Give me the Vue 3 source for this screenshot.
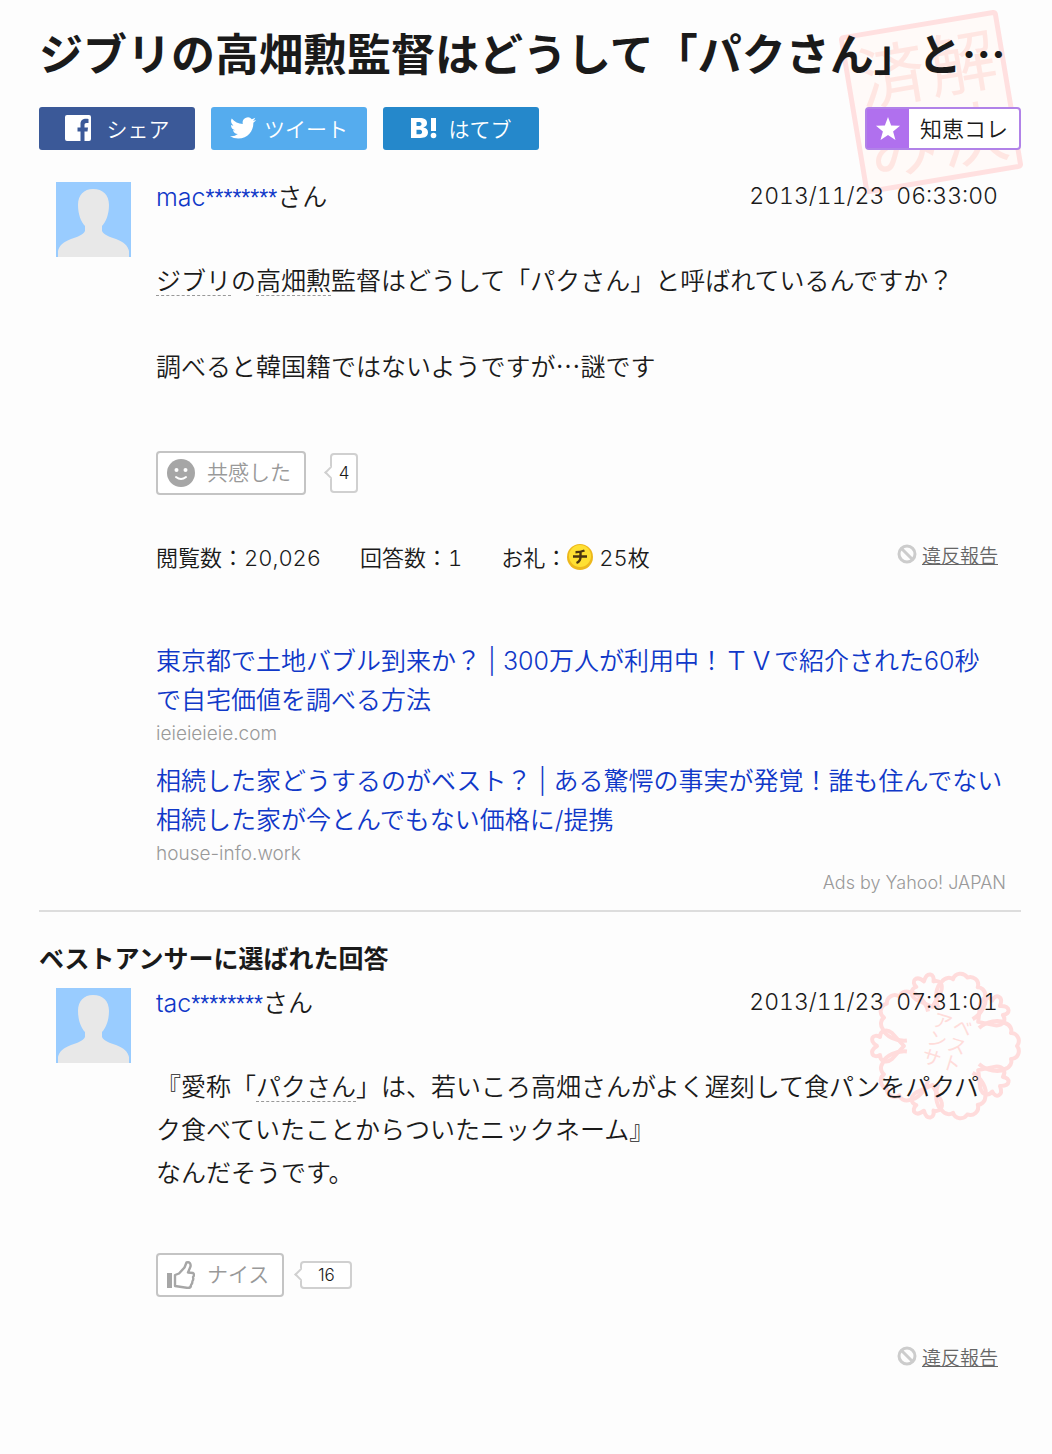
<script setup>
const question = {
  user: 'mac',
  date: '2013/11/23',
  time: '06:33:00',
  empathy: 4,
}

const answer = {
  user: 'tac',
  date: '2013/11/23',
  time: '07:31:01',
  nice: 16,
}

const ads = [
  {
    title: '東京都で土地バブル到来か？ | 300万人が利用中！ＴＶで紹介された60秒で自宅価値を調べる方法',
    domain: 'ieieieieie.com',
  },
  {
    title: '相続した家どうするのがベスト？ | ある驚愕の事実が発覚！誰も住んでない相続した家が今とんでもない価格に/提携',
    domain: 'house-info.work',
  },
]

// 桜スタンプの花びらの角度
const petals = [0, 72, 144, 216, 288]
</script>

<template>
  <main class="page">
    <header class="head">
      <svg class="stamp-solved" viewBox="0 0 190 190" aria-hidden="true">
        <g transform="rotate(-9.5 95 97)">
          <rect x="17" y="19" width="156" height="156" rx="2" />
          <text x="98" y="89">解</text>
          <text x="98" y="161">決</text>
          <text x="26" y="89">済</text>
          <text x="26" y="161">み</text>
        </g>
      </svg>
      <h1>ジブリの高畑勲監督はどうして「パクさん」と…</h1>
      <div class="share">
        <button type="button" class="sns facebook">
          <svg width="26" height="26" viewBox="0 0 26 26" aria-hidden="true">
            <path fill="#fff" d="M2 0h22a2 2 0 0 1 2 2v22a2 2 0 0 1-2 2h-4.500v-9.500h3l.5-4h-3.500v-2.500c0-1.300.5-2 2-2h2V4c-5-.8-8 .8-8 5v3.500h-3v4h3V26H2a2 2 0 0 1-2-2V2a2 2 0 0 1 2-2z" />
          </svg>
          <span>シェア</span>
        </button>
        <button type="button" class="sns twitter">
          <svg width="26" height="26" viewBox="0 0 24 24" aria-hidden="true">
            <path fill="#fff" d="M23.950 4.570a10 10 0 0 1-2.820.78 4.960 4.960 0 0 0 2.160-2.730c-.95.56-2 .96-3.130 1.190a4.920 4.920 0 0 0-8.380 4.480C7.690 8.090 4.070 6.130 1.640 3.160a4.820 4.820 0 0 0-.67 2.480c0 1.710.87 3.210 2.190 4.100a4.900 4.900 0 0 1-2.230-.62v.06a4.920 4.920 0 0 0 3.950 4.830 5 5 0 0 1-2.210.08 4.940 4.940 0 0 0 4.600 3.420A9.870 9.870 0 0 1 0 19.540a13.990 13.990 0 0 0 7.550 2.210c9.050 0 14-7.500 14-13.990 0-.21 0-.42-.02-.63a9.940 9.940 0 0 0 2.460-2.550z" />
          </svg>
          <span>ツイート</span>
        </button>
        <button type="button" class="sns hatena">
          <svg width="26" height="22" viewBox="0 0 26 22" aria-hidden="true">
            <path fill="#fff" fill-rule="evenodd" d="M0 1h8.500c5 0 7.500 1.500 7.500 5 0 2.400-1.300 3.900-3.800 4.400 3 .3 4.800 2 4.800 4.900 0 3.800-2.700 5.700-7.500 5.700H0zM5.500 5v4h2c2 0 3-.6 3-2s-1-2-3-2zM5.500 12.700v4.500h2.300c2.200 0 3.300-.7 3.300-2.300s-1.100-2.200-3.300-2.200zM20 1h5v13h-5z" />
            <circle cx="22.500" cy="18.500" r="2.800" fill="#fff" />
          </svg>
          <span>はてブ</span>
        </button>
        <button type="button" class="collect">
          <span class="star">
            <svg width="26" height="26" viewBox="0 0 24 24" aria-hidden="true">
              <path fill="#fff" d="M12 1l2.900 7.700 8.200.4-6.400 5.100 2.200 7.900L12 17.600l-6.900 4.500 2.200-7.900L.9 9.100l8.200-.4z" />
            </svg>
          </span>
          <span class="collect-label">知恵コレ</span>
        </button>
      </div>
    </header>

    <article class="post question">
      <svg class="avatar" viewBox="0 0 75 75" aria-hidden="true">
        <rect width="75" height="75" fill="#99ccff" />
        <path fill="#e8e8e8" d="M37 7c10 0 16 6 16 16 0 9-3 17-7 21v5c2 4 8 6 14 8 8 3 12 7 13 12v6H2v-6c1-5 5-9 13-12 6-2 12-4 14-8v-5c-4-4-7-12-7-21C22 13 28 7 37 7z" />
      </svg>
      <div class="post-main">
        <div class="meta">
          <p class="user"><a href="#">{{ question.user }}<span class="mask">********</span></a>さん</p>
          <p class="date"><span>{{ question.date }}</span><span>{{ question.time }}</span></p>
        </div>
        <p class="body">
          <span class="keyword">ジブリ</span>の<span class="keyword">高畑勲</span>監督はどうして「パクさん」と呼ばれているんですか？<br><br>調べると韓国籍ではないようですが…謎です
        </p>
        <div class="react">
          <button type="button" class="react-btn">
            <svg width="28" height="28" viewBox="0 0 28 28" aria-hidden="true">
              <circle cx="14" cy="14" r="14" fill="#a6a6a6" />
              <circle cx="9.500" cy="11" r="2" fill="#fff" />
              <circle cx="18.500" cy="11" r="2" fill="#fff" />
              <path d="M9 18q5 4 10 0" fill="none" stroke="#fff" stroke-width="2" stroke-linecap="round" />
            </svg>
            <span>共感した</span>
          </button>
          <span class="bubble tall">{{ question.empathy }}</span>
        </div>
        <div class="info">
          <ul class="stats">
            <li>閲覧数：20,026</li>
            <li>回答数：1</li>
            <li>
              お礼：<svg class="coin" viewBox="0 0 26 26" aria-hidden="true">
                <circle cx="13" cy="13" r="13" fill="#edb81c" />
                <circle cx="13" cy="12" r="11" fill="#ffe032" />
                <path d="M17.500 6.500q-4 1.700-9 1.700M6 12.500h14M13.500 8v5q0 4.500-4 6" fill="none" stroke="#4a3510" stroke-width="2.400" />
              </svg>25枚
            </li>
          </ul>
          <a href="#" class="report">
            <svg width="20" height="20" viewBox="0 0 20 20" aria-hidden="true">
              <circle cx="10" cy="10" r="8" />
              <path d="M4.500 4.500l11 11" />
            </svg>
            <span>違反報告</span>
          </a>
        </div>
        <ul class="ads">
          <li v-for="ad in ads" :key="ad.domain">
            <a href="#">{{ ad.title }}</a>
            <p class="domain">{{ ad.domain }}</p>
          </li>
        </ul>
        <p class="ads-by">Ads by Yahoo! JAPAN</p>
      </div>
    </article>

    <section class="best">
      <h2>ベストアンサーに選ばれた回答</h2>
      <article class="post answer">
        <svg class="stamp-best" viewBox="-80 -80 160 160" aria-hidden="true">
          <g v-for="deg in petals" :key="deg" :transform="`rotate(${deg})`">
            <path d="M34 -18C42 -25 54 -27 60 -23C66 -21 67 -16 66 -13C73 -13 76 -5 72 0C76 5 73 13 66 13C67 16 66 21 60 23C54 27 42 25 34 18" />
            <path transform="rotate(36)" d="M41 0L53 -13C59 -18 65 -15 65 -9C72 -13 77 -6 68 0C77 6 72 13 65 9C65 15 59 18 53 13Z" />
          </g>
          <g transform="rotate(17)">
            <text x="2" y="-16">ベ</text>
            <text x="2" y="3">ス</text>
            <text x="2" y="22">ト</text>
            <text x="-19" y="-16">ア</text>
            <text x="-19" y="3">ン</text>
            <text x="-19" y="22">サ</text>
          </g>
        </svg>
        <svg class="avatar" viewBox="0 0 75 75" aria-hidden="true">
          <rect width="75" height="75" fill="#99ccff" />
          <path fill="#e8e8e8" d="M37 7c10 0 16 6 16 16 0 9-3 17-7 21v5c2 4 8 6 14 8 8 3 12 7 13 12v6H2v-6c1-5 5-9 13-12 6-2 12-4 14-8v-5c-4-4-7-12-7-21C22 13 28 7 37 7z" />
        </svg>
        <div class="post-main">
          <div class="meta">
            <p class="user"><a href="#">{{ answer.user }}<span class="mask">********</span></a>さん</p>
            <p class="date"><span>{{ answer.date }}</span><span>{{ answer.time }}</span></p>
          </div>
          <p class="body">
            『愛称「<span class="keyword">パクさん</span>」は、若いころ高畑さんがよく遅刻して食パンをパクパク食べていたことからついたニックネーム』<br>なんだそうです。
          </p>
          <div class="react">
            <button type="button" class="react-btn">
              <svg width="28" height="28" viewBox="0 0 28 28" aria-hidden="true">
                <path d="M0 12h5v15H0z" fill="#a6a6a6" />
                <path d="M8 25V14l4-1.500 5.500-6 2-5c3-1 4.500 1 4 4L21 11.500l5 .5c1.500 1 1 3 0 4 .5 2 .5 3-.5 4 0 2-.5 3-1.500 4 0 2-1 3-3 3z" fill="none" stroke="#a6a6a6" stroke-width="2.400" stroke-linejoin="round" />
              </svg>
              <span>ナイス</span>
            </button>
            <span class="bubble wide">{{ answer.nice }}</span>
          </div>
          <div class="info end">
            <a href="#" class="report">
              <svg width="20" height="20" viewBox="0 0 20 20" aria-hidden="true">
                <circle cx="10" cy="10" r="8" />
                <path d="M4.500 4.500l11 11" />
              </svg>
              <span>違反報告</span>
            </a>
          </div>
        </div>
      </article>
    </section>
  </main>
</template>

<style>
body {
  background: #fdfdfd;
}
</style>

<style scoped>
.page {
  padding: 24px 31px 80px 39px;
  color: #1a1a1a;
  font-family: Inter, "Noto Sans CJK JP", sans-serif;
  font-size: 25px;
  font-weight: 350;
}

h1, h2, p, ul {
  margin: 0;
  padding: 0;
}

li {
  list-style: none;
}

a {
  color: #1038c8;
  text-decoration: none;
}

button {
  padding: 0;
  font: inherit;
  cursor: pointer;
}

.head {
  position: relative;
}

h1 {
  position: relative;
  font-family: "Noto Sans CJK JP", sans-serif;
  font-size: 44px;
  line-height: 56px;
  font-weight: 700;
  white-space: nowrap;
}

.stamp-solved {
  position: absolute;
  top: -19px;
  right: -5px;
  width: 190px;
  height: 190px;
}

.stamp-solved rect {
  fill: #fffaf8;
  stroke: #ffe0e0;
  stroke-width: 5;
}

.stamp-solved text {
  fill: #ffe6e2;
  font-size: 68px;
  font-weight: 400;
}

.share {
  position: relative;
  display: flex;
  gap: 16px;
  margin-top: 27px;
}

.sns {
  display: flex;
  align-items: center;
  justify-content: center;
  gap: 12px;
  width: 156px;
  height: 43px;
  border: 0;
  border-radius: 3px;
  color: #fff;
  font-size: 21px;
}

.sns span {
  padding-bottom: 2px;
}

.sns svg {
  margin-bottom: 2px;
}

.facebook { background: #3b5998; gap: 16px; }
.twitter { background: #55acee; gap: 8px; }
.hatena { background: #2588cb; }

.collect {
  display: flex;
  width: 156px;
  height: 43px;
  margin-left: auto;
  border: 2px solid #b182e8;
  border-radius: 4px;
  background: #fff;
  color: #1a1a1a;
  font-size: 22px;
}

.star {
  display: flex;
  align-items: center;
  justify-content: center;
  width: 42px;
  height: 100%;
  background: #b070ee;
}

.collect-label {
  flex: 1;
  line-height: 40px;
}

.post {
  position: relative;
  display: flex;
  gap: 25px;
  padding-left: 17px;
}

.question {
  margin-top: 32px;
}

.avatar {
  flex: none;
  width: 75px;
  height: 75px;
}

.post-main {
  position: relative;
  flex: 1;
  min-width: 0;
}

.meta {
  display: flex;
  justify-content: space-between;
  padding-right: 23px;
  line-height: 30px;
}

.mask {
  font-family: "Liberation Sans", sans-serif;
  font-size: 23px;
}

.date {
  display: flex;
  gap: 12px;
  font-size: 23px;
  line-height: 28px;
  font-variant-numeric: tabular-nums;
}

.body {
  margin-top: 45px;
  padding-right: 23px;
  font-family: "Noto Sans CJK JP", sans-serif;
  line-height: 43px;
}

.keyword {
  text-decoration: underline dashed 1px #999;
  text-underline-offset: 5px;
  text-decoration-skip-ink: none;
}

.react {
  display: flex;
  align-items: center;
  gap: 24px;
  margin-top: 64px;
}

.answer .react {
  gap: 16px;
  margin-top: 60px;
}

.react-btn {
  display: flex;
  align-items: center;
  gap: 12px;
  height: 44px;
  padding: 0 13px 0 9px;
  border: 2px solid #c4c4c4;
  border-radius: 4px;
  background: #fff;
  color: #999;
  font-size: 21px;
}

.react-btn span {
  padding-bottom: 4px;
}

.bubble {
  position: relative;
  box-sizing: border-box;
  border: 2px solid #d0d0d0;
  border-radius: 4px;
  background: #fff;
  font-size: 17px;
  text-align: center;
}

.bubble::before {
  content: '';
  position: absolute;
  left: -6px;
  top: 50%;
  width: 7px;
  height: 7px;
  margin-top: -5px;
  border: solid #d0d0d0;
  border-width: 0 0 2px 2px;
  background: #fff;
  transform: rotate(45deg);
}

.tall {
  width: 28px;
  line-height: 36px;
}

.wide {
  width: 52px;
  line-height: 24px;
}

.info {
  display: flex;
  justify-content: space-between;
  margin-top: 45px;
  padding-right: 23px;
}

.end {
  justify-content: flex-end;
}

.stats {
  display: flex;
  gap: 39px;
  font-size: 22px;
  line-height: 36px;
  font-variant-numeric: tabular-nums;
}

.coin {
  width: 26px;
  height: 26px;
  margin-right: 6px;
  vertical-align: -4px;
}

.report {
  display: flex;
  gap: 5px;
  align-items: center;
  height: 28px;
  color: #666;
  font-size: 19px;
  text-decoration: underline;
}

.report svg {
  fill: none;
  stroke: #ccc;
  stroke-width: 3;
}

.ads {
  margin-top: 66px;
  padding-right: 17px;
}

.ads li + li {
  margin-top: 14px;
}

.ads a {
  display: block;
  line-height: 39px;
}

.domain,
.ads-by {
  color: #999;
  font-size: 19px;
  line-height: 28px;
}

.ads-by {
  margin-top: 1px;
  padding-right: 15px;
  font-size: 18px;
  text-align: right;
}

.best {
  margin-top: 13px;
  padding-top: 31px;
  border-top: 2px solid #ddd;
}

h2 {
  margin-bottom: 13px;
  font-size: 25px;
  line-height: 32px;
  font-weight: 700;
}

.stamp-best {
  position: absolute;
  top: -22px;
  right: -4px;
  width: 160px;
  height: 160px;
}

.stamp-best path {
  fill: none;
  stroke: #ffdcdc;
  stroke-width: 4;
  stroke-linejoin: round;
}

.stamp-best text {
  fill: #ffdcda;
  font-size: 19px;
  font-weight: 400;
}
</style>
